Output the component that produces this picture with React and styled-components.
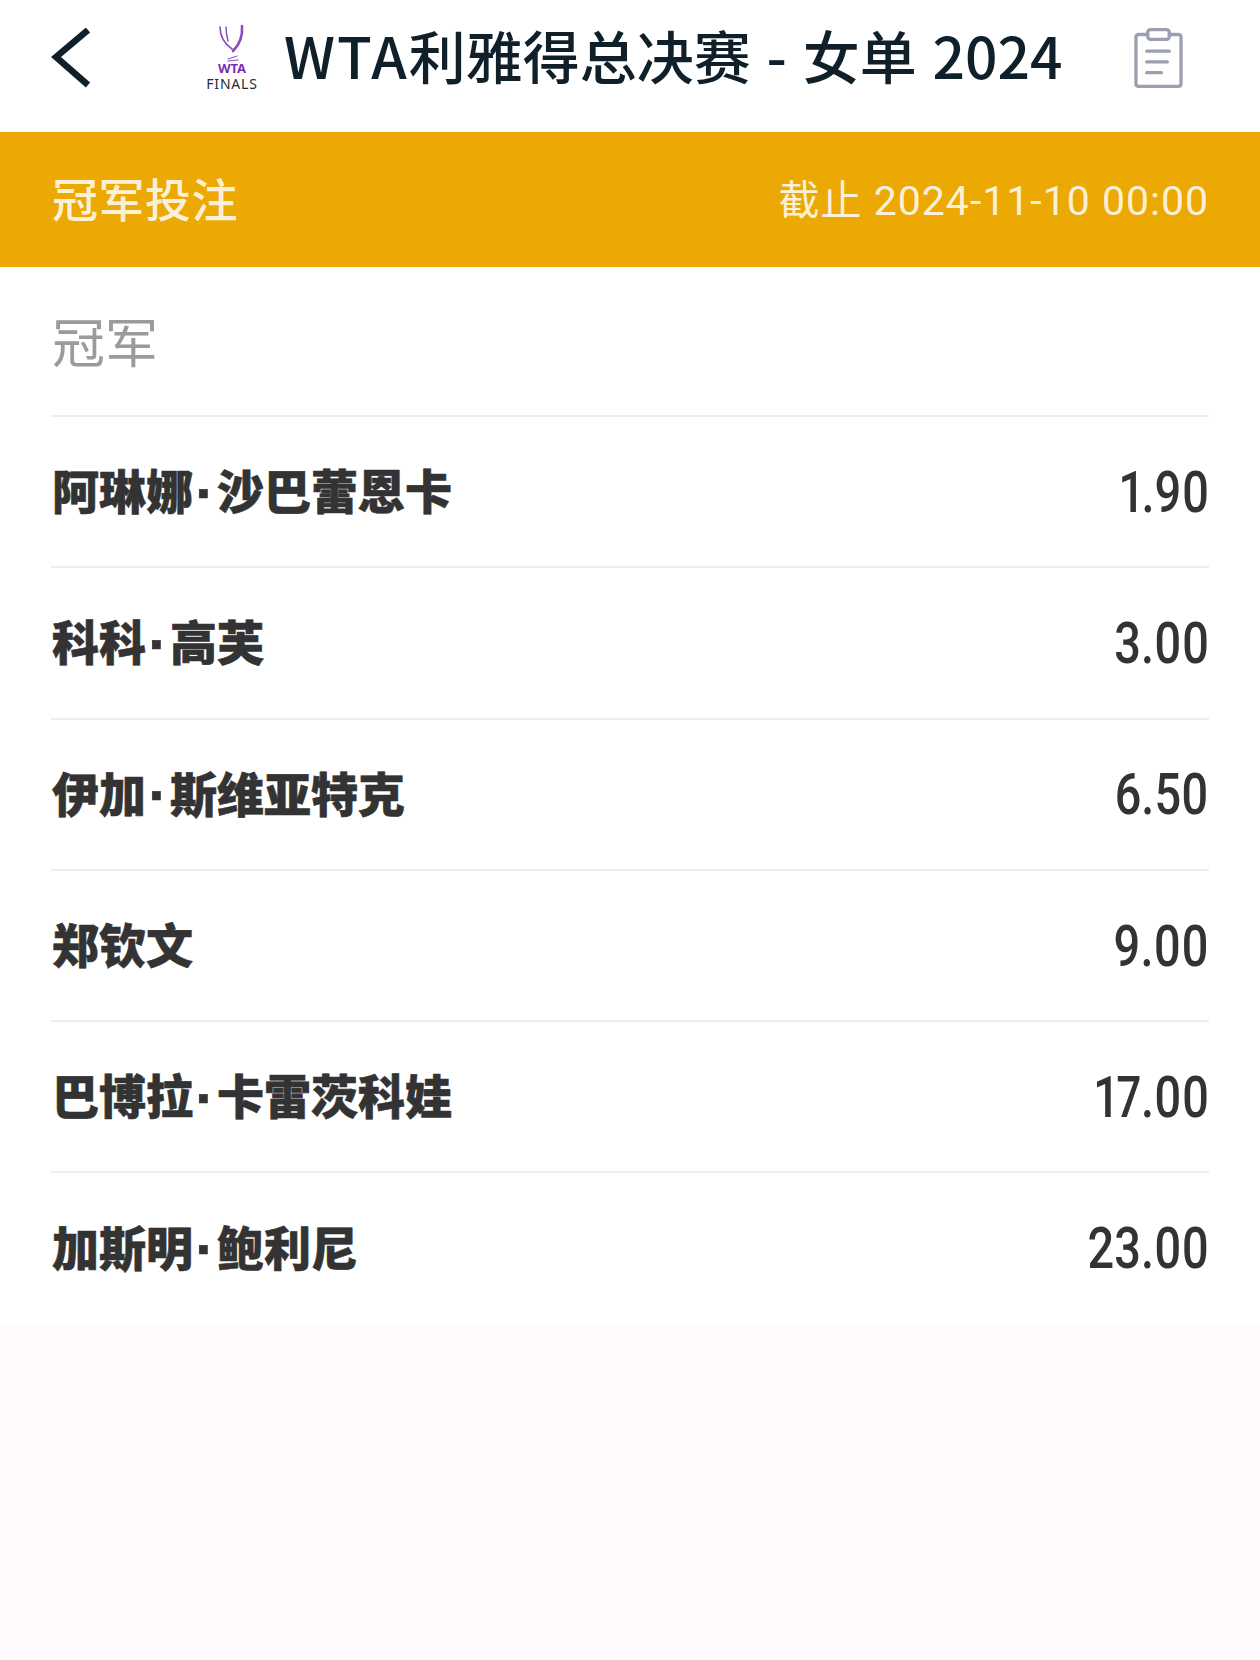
import React from "react";
import styled, { createGlobalStyle } from "styled-components";

const GlobalStyle = createGlobalStyle`
  html, body {
    margin: 0;
    padding: 0;
    background: #fefafe;
  }
  * {
    box-sizing: border-box;
  }
`;

const Page = styled.div`
  width: 1260px;
  height: 1660px;
  overflow: hidden;
  background: #fefafe;
  font-family: "Noto Sans CJK SC", "Noto Sans", sans-serif;
`;

const Header = styled.header`
  height: 132px;
  background: #fff;
  display: flex;
  align-items: center;
  padding: 0 77px 16px 51px;
`;

const BackButton = styled.div`
  width: 141px;
  display: flex;
  align-items: center;
  height: 100%;
`;

const LogoBox = styled.div`
  width: 80px;
  display: flex;
  justify-content: center;
`;

const Title = styled.h1`
  flex: 1;
  margin: 0 0 7px 12px;
  font-size: 57px;
  font-weight: 500;
  color: #10202b;
  white-space: nowrap;
  word-spacing: 3px;
  line-height: 1;
`;

const Brand = styled.span`
  letter-spacing: 2px;
`;

const Banner = styled.div`
  height: 135px;
  background: #eca803;
  color: #fbf0d6;
  display: flex;
  align-items: center;
  justify-content: space-between;
  padding: 0 51px 6px 52px;
`;

const BannerTitle = styled.div`
  font-size: 46px;
  font-weight: 500;
  letter-spacing: 0.5px;
`;

const Deadline = styled.div`
  font-family: "Roboto", "Noto Sans CJK SC", sans-serif;
  font-size: 41px;
  font-weight: 400;
  letter-spacing: 1px;
`;

const Card = styled.section`
  background: #fff;
  padding: 0 51px 2px;
`;

const SectionLabel = styled.div`
  height: 148px;
  display: flex;
  align-items: center;
  font-size: 53px;
  font-weight: 400;
  color: #9b9b9b;
  padding: 0 0 2px 1px;
`;

const Row = styled.div`
  height: 151.3px;
  border-top: 2px solid #eeeeee;
  display: flex;
  align-items: center;
  justify-content: space-between;
`;

const Name = styled.div`
  display: flex;
  align-items: center;
  margin: 0 0 6px 1px;
  font-size: 47px;
  font-weight: 900;
  color: #333;
  -webkit-text-stroke: 0.6px #333;
`;

const Dot = styled.span`
  width: 24px;
  padding-top: 8px;
  text-align: center;
  font-family: "Liberation Sans", sans-serif;
  font-size: 58px;
  font-weight: 700;
  line-height: 1;
`;

const Odds = styled.div`
  font-family: "Roboto", "Liberation Sans", sans-serif;
  font-size: 58px;
  font-weight: 500;
  font-variant-numeric: proportional-nums;
  color: #333;
  transform: scaleX(0.81);
  transform-origin: right center;
`;

const players = [
  { name: ["阿琳娜", "沙巴蕾恩卡"], odds: "1.90" },
  { name: ["科科", "高芙"], odds: "3.00" },
  { name: ["伊加", "斯维亚特克"], odds: "6.50" },
  { name: ["郑钦文"], odds: "9.00" },
  { name: ["巴博拉", "卡雷茨科娃"], odds: "17.00" },
  { name: ["加斯明", "鲍利尼"], odds: "23.00" },
];

function BackIcon() {
  return (
    <svg width="42" height="60" viewBox="0 0 42 60">
      <path d="M37 2 L5 29 L37 57" fill="none" stroke="#10202b" strokeWidth="6.5" />
    </svg>
  );
}

function FinalsLogo() {
  return (
    <svg width="54" height="68" viewBox="0 0 54 68">
      <g fill="none" stroke="#8a4bb8" strokeLinecap="round">
        <path d="M15 3 C15 13 20 20 27 25" strokeWidth="1.6" />
        <path d="M37 2 C38 13 34 21 28 27" strokeWidth="2.6" />
        <path d="M21 3 C21 9 22 13 23 17" strokeWidth="1.4" />
        <path d="M23 35 L32 32" strokeWidth="1" />
        <path d="M23 37 L33 36" strokeWidth="1" />
      </g>
      <text x="27" y="49" textAnchor="middle" fontSize="13" fontWeight="700" fontFamily="Noto Sans, sans-serif" fill="#7b2fb0">WTA</text>
      <text x="27" y="65" textAnchor="middle" fontSize="14" letterSpacing="0.8" fontFamily="Noto Sans, sans-serif" fill="#222b36">FINALS</text>
    </svg>
  );
}

function ClipboardIcon() {
  return (
    <svg width="49" height="62" viewBox="0 0 50 62" fill="none" stroke="#9b9fb0" strokeLinecap="round" strokeLinejoin="round">
      <path d="M14 7 H5 Q2 7 2 10 V57 Q2 60 5 60 H45 Q48 60 48 57 V10 Q48 7 45 7 H36" strokeWidth="3.4" />
      <rect x="14" y="2" width="22" height="10" rx="3" strokeWidth="3.4" />
      <path d="M13 24 H36 M13 35 H34 M13 46 H28" strokeWidth="3.4" />
    </svg>
  );
}

export default function App() {
  return (
    <Page>
      <GlobalStyle />
      <Header>
        <BackButton>
          <BackIcon />
        </BackButton>
        <LogoBox>
          <FinalsLogo />
        </LogoBox>
        <Title>
          <Brand>WTA</Brand>利雅得总决赛 - 女单 2024
        </Title>
        <ClipboardIcon />
      </Header>
      <Banner>
        <BannerTitle>冠军投注</BannerTitle>
        <Deadline>截止 2024-11-10 00:00</Deadline>
      </Banner>
      <Card>
        <SectionLabel>冠军</SectionLabel>
        {players.map((p) => (
          <Row key={p.odds}>
            <Name>
              {p.name[0]}
              {p.name[1] && <Dot>·</Dot>}
              {p.name[1]}
            </Name>
            <Odds>{p.odds}</Odds>
          </Row>
        ))}
      </Card>
    </Page>
  );
}
